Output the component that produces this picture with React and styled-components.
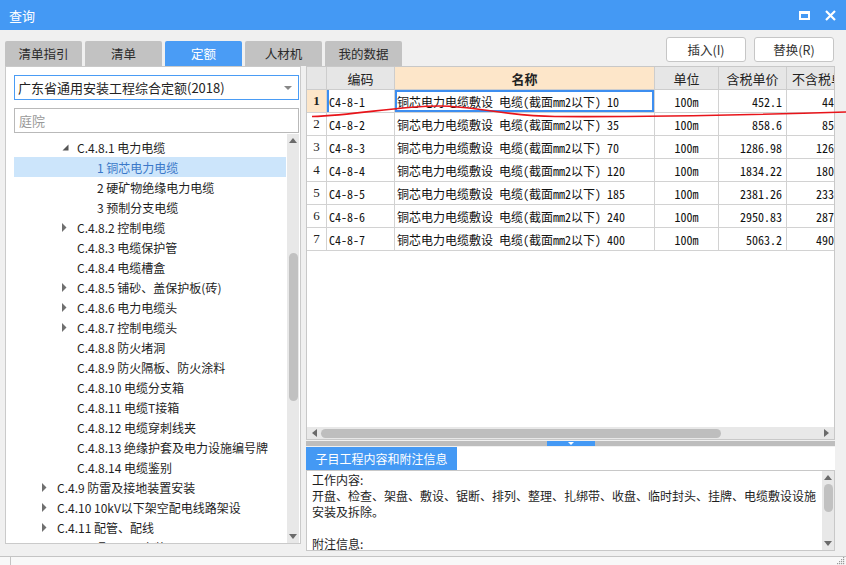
import React from 'react';
import styled, { createGlobalStyle } from 'styled-components';

const Global = createGlobalStyle`
  html, body { margin: 0; padding: 0; }
  body {
    width: 846px; height: 565px; overflow: hidden; background: #f0f0f0;
    font-family: "Noto Sans CJK SC", "Microsoft YaHei", sans-serif;
  }
  * { box-sizing: border-box; }
`;

const BLUE = '#4499f4';

const Window = styled.div`
  position: relative;
  width: 846px;
  height: 565px;
  display: flex;
  flex-direction: column;
  background: #f0f0f0;
  overflow: hidden;
`;

const TitleBar = styled.div`
  flex: none;
  height: 30px;
  background: ${BLUE};
  display: flex;
  align-items: center;
  padding: 0 10px 0 9px;
  color: #fff;
  font-size: 13px;
`;

const TitleControls = styled.div`
  margin-left: auto;
  display: flex;
  align-items: center;
  gap: 15px;
`;

const TopBar = styled.div`
  flex: none;
  height: 36px;
  display: flex;
  padding: 0 12px 0 5px;
`;

const Tabs = styled.div`
  display: flex;
  gap: 3px;
  align-self: flex-end;
`;

const Tab = styled.div`
  width: 77px;
  height: 25px;
  border-radius: 2px 2px 0 0;
  background: ${p => (p.$active ? '#4a9cf5' : '#c2c2c2')};
  color: ${p => (p.$active ? '#fff' : '#2a2a2a')};
  font-size: 12.5px;
  display: flex;
  align-items: center;
  justify-content: center;
`;

const Buttons = styled.div`
  margin-left: auto;
  margin-top: 7px;
  display: flex;
  gap: 8px;
  align-self: flex-start;
`;

const Button = styled.div`
  width: 80px;
  height: 25px;
  background: #fff;
  border: 1px solid #c6c6c6;
  border-radius: 3px;
  font-size: 12.5px;
  color: #333;
  display: flex;
  align-items: center;
  justify-content: center;
`;

const Main = styled.div`
  flex: 1;
  display: flex;
  gap: 5px;
  padding: 0 11px 0 5px;
  min-height: 0;
`;

const LeftPanel = styled.div`
  width: 296px;
  height: 478px;
  background: #fff;
  border: 1px solid #cacaca;
  display: flex;
  flex-direction: column;
  padding: 8px 1px 0 8px;
`;

const Select = styled.div`
  height: 25px;
  border: 1px solid #4a9cf5;
  display: flex;
  align-items: center;
  padding: 0 6px 0 3px;
  font-size: 13px;
  color: #222;
  margin-bottom: 8px;
`;

const SelectArrow = styled.span`
  margin-left: auto;
  width: 0;
  height: 0;
  border-left: 4px solid transparent;
  border-right: 4px solid transparent;
  border-top: 4px solid #888;
`;

const SearchBox = styled.div`
  height: 25px;
  border: 1px solid #b9b9b9;
  display: flex;
  align-items: center;
  padding: 0 4px;
  font-size: 13px;
  color: #9a9a9a;
`;

const TreeArea = styled.div`
  flex: 1;
  display: flex;
  min-height: 0;
  margin-top: 1px;
`;

const TreeList = styled.div`
  flex: 1;
  overflow: hidden;
  padding-top: 3px;
`;

const TreeRow = styled.div`
  height: 20px;
  display: flex;
  align-items: center;
  padding-left: ${p => 28 + p.$level * 20}px;
  margin-right: 1px;
  font-size: 12px;
  white-space: pre;
  color: ${p => (p.$selected ? '#3b78c8' : '#1e1e1e')};
  background: ${p => (p.$selected ? '#cce5fb' : 'transparent')};
`;

const Twisty = styled.span`
  width: 15px;
  flex: none;
  display: flex;
  align-items: center;
`;

const VScroll = styled.div`
  width: 12px;
  flex: none;
  background: #e8e8e8;
  display: flex;
  flex-direction: column;
  align-items: center;
  padding: 4px 0;
`;

const ScrollThumbV = styled.div`
  width: 9px;
  height: ${p => p.$h}px;
  margin-top: ${p => p.$top}px;
  border-radius: 5px;
  background: #c1c1c1;
`;

const ArrowUp = styled.span`
  width: 0; height: 0;
  border-left: 4px solid transparent;
  border-right: 4px solid transparent;
  border-bottom: 5px solid #6b6b6b;
`;

const ArrowDown = styled.span`
  margin-top: auto;
  width: 0; height: 0;
  border-left: 4px solid transparent;
  border-right: 4px solid transparent;
  border-top: 5px solid #6b6b6b;
`;

const RightCol = styled.div`
  width: 529px;
  height: 485px;
  display: flex;
  flex-direction: column;
`;

const GridBox = styled.div`
  height: 374px;
  flex: none;
  border: 1px solid #c8c8c8;
  background: #fff;
  display: flex;
  flex-direction: column;
`;

const GridView = styled.div`
  flex: 1;
  overflow: hidden;
`;

const COLS = '20px 68px 260px 64px 68px 76px';

const GridRow = styled.div`
  display: grid;
  grid-template-columns: ${COLS};
  width: 556px;
  height: 23px;
`;

const HeadCell = styled.div`
  background: ${p => (p.$hl ? '#fde6c9' : '#e6e6e6')};
  border-right: 1px solid #cdcdcd;
  border-bottom: 1px solid #cdcdcd;
  display: flex;
  align-items: center;
  justify-content: center;
  font-size: 13px;
  font-weight: ${p => (p.$bold ? 700 : 400)};
  color: #222;
  white-space: nowrap;
  overflow: hidden;
`;

const NumCell = styled.div`
  background: ${p => (p.$current ? '#fde6c9' : '#fff')};
  border-right: 1px solid #d2d2d2;
  border-bottom: 1px solid #d2d2d2;
  display: flex;
  align-items: center;
  justify-content: center;
  font-family: "Liberation Serif", serif;
  font-size: 13px;
  font-weight: ${p => (p.$current ? 700 : 400)};
  color: #222;
`;

const Cell = styled.div`
  border-right: 1px solid #d2d2d2;
  border-bottom: 1px solid #d2d2d2;
  display: flex;
  align-items: center;
  justify-content: ${p => (p.$align === 'right' ? 'flex-end' : p.$align === 'center' ? 'center' : 'flex-start')};
  padding: 0 ${p => (p.$align === 'right' ? '4px' : '2px')} 0 2px;
  font-family: "Noto Sans Mono CJK SC", "Noto Sans CJK SC", monospace;
  font-size: 12px;
  color: #111;
  white-space: nowrap;
  overflow: hidden;
  box-shadow: ${p => (p.$focus ? 'inset 0 0 0 2px #3d8ef0' : p.$mark ? 'inset 2px 0 0 #3d8ef0' : 'none')};
`;

const HScroll = styled.div`
  height: 12px;
  flex: none;
  background: #e8e8e8;
  display: flex;
  align-items: center;
  padding: 0 5px;
`;

const ArrowLeft = styled.span`
  width: 0; height: 0;
  border-top: 4px solid transparent;
  border-bottom: 4px solid transparent;
  border-right: 5px solid #6b6b6b;
`;

const ArrowRight = styled.span`
  margin-left: auto;
  width: 0; height: 0;
  border-top: 4px solid transparent;
  border-bottom: 4px solid transparent;
  border-left: 5px solid #6b6b6b;
`;

const ScrollThumbH = styled.div`
  height: 9px;
  width: ${p => p.$w}px;
  margin-left: ${p => p.$left}px;
  border-radius: 5px;
  background: #bebebe;
`;

const Splitter = styled.div`
  height: 5px;
  margin-top: 1px;
  flex: none;
  background: #bdbdbd;
  display: flex;
  justify-content: center;
`;

const SplitHandle = styled.div`
  width: 48px;
  background: ${BLUE};
  display: flex;
  justify-content: center;
  padding-top: 1px;
  &::after {
    content: '';
    width: 0; height: 0;
    border-left: 3px solid transparent;
    border-right: 3px solid transparent;
    border-top: 3px solid #fff;
  }
`;

const InfoTabRow = styled.div`
  margin-top: 1px;
  height: 23px;
  flex: none;
  background: #fff;
  display: flex;
`;

const InfoTab = styled.div`
  width: 151px;
  background: ${BLUE};
  color: #fff;
  font-size: 12px;
  display: flex;
  align-items: center;
  justify-content: center;
`;

const InfoBox = styled.div`
  flex: 1;
  border: 1px solid #c8c8c8;
  background: #fff;
  display: flex;
  min-height: 0;
`;

const InfoText = styled.div`
  flex: 1;
  overflow: hidden;
  padding: 1px 1px 0 5px;
  font-size: 12px;
  line-height: 16px;
  color: #1e1e1e;
  white-space: pre-wrap;
`;

const StatusBar = styled.div`
  flex: none;
  height: 9px;
  border-top: 1px solid #c4c4c4;
  background: #f8f8f8;
  display: flex;
`;

const StatusCell = styled.div`
  width: 11px;
  border-right: 1px solid #c4c4c4;
`;

const Grip = styled.svg`
  margin-left: auto;
  margin-right: 1px;
`;

const Overlay = styled.svg`
  position: absolute;
  left: 0;
  top: 0;
  pointer-events: none;
`;

const TriRight = () => (
  <svg width="5" height="9" viewBox="0 0 5 9"><polygon points="0,0 4.5,4.5 0,9" fill="#707070" /></svg>
);
const TriDown = () => (
  <svg width="7" height="7" viewBox="0 0 7 7"><polygon points="6.5,0.5 6.5,6.5 0.5,6.5" fill="#555" /></svg>
);

const tree = [
  { level: 1, exp: 'open', text: 'C.4.8.1 电力电缆' },
  { level: 2, text: '1 铜芯电力电缆', selected: true },
  { level: 2, text: '2 硬矿物绝缘电力电缆' },
  { level: 2, text: '3 预制分支电缆' },
  { level: 1, exp: 'closed', text: 'C.4.8.2 控制电缆' },
  { level: 1, text: 'C.4.8.3 电缆保护管' },
  { level: 1, text: 'C.4.8.4 电缆槽盒' },
  { level: 1, exp: 'closed', text: 'C.4.8.5 铺砂、盖保护板(砖)' },
  { level: 1, exp: 'closed', text: 'C.4.8.6 电力电缆头' },
  { level: 1, exp: 'closed', text: 'C.4.8.7 控制电缆头' },
  { level: 1, text: 'C.4.8.8 防火堵洞' },
  { level: 1, text: 'C.4.8.9 防火隔板、防火涂料' },
  { level: 1, text: 'C.4.8.10 电缆分支箱' },
  { level: 1, text: 'C.4.8.11 电缆T接箱' },
  { level: 1, text: 'C.4.8.12 电缆穿刺线夹' },
  { level: 1, text: 'C.4.8.13 绝缘护套及电力设施编号牌' },
  { level: 1, text: 'C.4.8.14 电缆鉴别' },
  { level: 0, exp: 'closed', text: 'C.4.9 防雷及接地装置安装' },
  { level: 0, exp: 'closed', text: 'C.4.10 10kV以下架空配电线路架设' },
  { level: 0, exp: 'closed', text: 'C.4.11 配管、配线' },
  { level: 0, exp: 'closed', text: 'C.4.12 照明器具安装' },
];

const rows = [
  ['C4-8-1', '10', '452.1', '446.71'],
  ['C4-8-2', '35', '858.6', '852.97'],
  ['C4-8-3', '70', '1286.98', '1267.48'],
  ['C4-8-4', '120', '1834.22', '1807.04'],
  ['C4-8-5', '185', '2381.26', '2335.16'],
  ['C4-8-6', '240', '2950.83', '2875.88'],
  ['C4-8-7', '400', '5063.2', '4905.53'],
];

const info = '工作内容:\n开盘、检查、架盘、敷设、锯断、排列、整理、扎绑带、收盘、临时封头、挂牌、电缆敷设设施安装及拆除。\n\n附注信息:';

export default function App() {
  return (
    <Window>
      <Global />
      <TitleBar>
        查询
        <TitleControls>
          <svg width="11" height="9" viewBox="0 0 11 9">
            <rect x="1" y="1.5" width="9" height="6.5" fill="none" stroke="#fff" strokeWidth="2" />
            <rect x="0" y="0" width="11" height="3" fill="#fff" />
          </svg>
          <svg width="11" height="11" viewBox="0 0 11 11">
            <path d="M1 1 L10 10 M10 1 L1 10" stroke="#fff" strokeWidth="2.2" />
          </svg>
        </TitleControls>
      </TitleBar>

      <TopBar>
        <Tabs>
          {['清单指引', '清单', '定额', '人材机', '我的数据'].map(t => (
            <Tab key={t} $active={t === '定额'}>{t}</Tab>
          ))}
        </Tabs>
        <Buttons>
          <Button>插入(I)</Button>
          <Button>替换(R)</Button>
        </Buttons>
      </TopBar>

      <Main>
        <LeftPanel>
          <Select>
            广东省通用安装工程综合定额(2018)
            <SelectArrow />
          </Select>
          <SearchBox>庭院</SearchBox>
          <TreeArea>
            <TreeList>
              {tree.map((n, i) => (
                <TreeRow key={i} $level={n.level} $selected={n.selected}>
                  <Twisty>
                    {n.exp === 'open' && <TriDown />}
                    {n.exp === 'closed' && <TriRight />}
                  </Twisty>
                  {n.text}
                </TreeRow>
              ))}
            </TreeList>
            <VScroll>
              <ArrowUp />
              <ScrollThumbV $top={110} $h={148} />
              <ArrowDown />
            </VScroll>
          </TreeArea>
        </LeftPanel>

        <RightCol>
          <GridBox>
            <GridView>
              <GridRow>
                <HeadCell />
                <HeadCell>编码</HeadCell>
                <HeadCell $hl $bold>名称</HeadCell>
                <HeadCell>单位</HeadCell>
                <HeadCell>含税单价</HeadCell>
                <HeadCell>不含税单价</HeadCell>
              </GridRow>
              {rows.map((r, i) => (
                <GridRow key={r[0]}>
                  <NumCell $current={i === 0}>{i + 1}</NumCell>
                  <Cell $mark={i === 0}>{r[0]}</Cell>
                  <Cell $focus={i === 0}>铜芯电力电缆敷设 电缆(截面mm2以下) {r[1]}</Cell>
                  <Cell $align="center">100m</Cell>
                  <Cell $align="right">{r[2]}</Cell>
                  <Cell $align="right">{r[3]}</Cell>
                </GridRow>
              ))}
            </GridView>
            <HScroll>
              <ArrowLeft />
              <ScrollThumbH $left={4} $w={400} />
              <ArrowRight />
            </HScroll>
          </GridBox>
          <Splitter>
            <SplitHandle />
          </Splitter>
          <InfoTabRow>
            <InfoTab>子目工程内容和附注信息</InfoTab>
          </InfoTabRow>
          <InfoBox>
            <InfoText>{info}</InfoText>
            <VScroll>
              <ArrowUp />
              <ScrollThumbV $top={4} $h={28} />
              <ArrowDown />
            </VScroll>
          </InfoBox>
        </RightCol>
      </Main>

      <StatusBar>
        <StatusCell />
        <Grip width="8" height="8" viewBox="0 0 8 8">
          {[[6, 0], [4, 2], [6, 2], [2, 4], [4, 4], [6, 4], [0, 6], [2, 6], [4, 6], [6, 6]].map(([x, y], i) => (
            <rect key={i} x={x} y={y} width="1.2" height="1.2" fill="#9a9a9a" />
          ))}
        </Grip>
      </StatusBar>

      <Overlay width="846" height="565" viewBox="0 0 846 565">
        <path
          d="M312 116.5 C 360 115 395 106 440 106 C 475 106 505 116 555 116.5 C 650 117 750 115 846 112"
          fill="none"
          stroke="#e8141a"
          strokeWidth="1.6"
        />
      </Overlay>
    </Window>
  );
}
